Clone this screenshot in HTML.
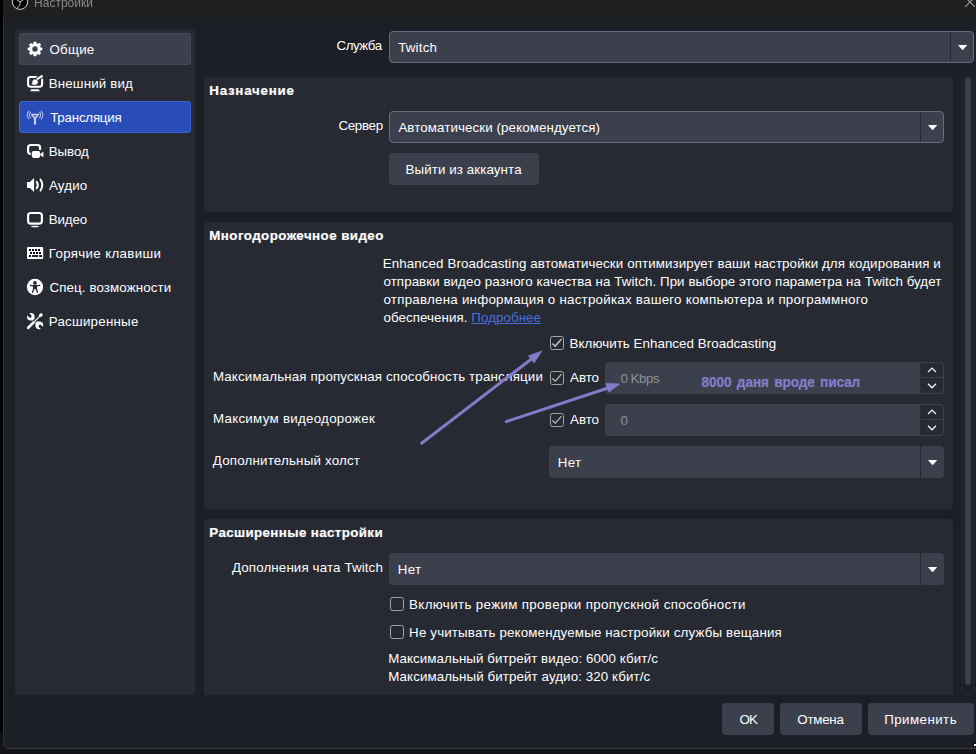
<!DOCTYPE html>
<html lang="ru">
<head>
<meta charset="utf-8">
<title>Настройки</title>
<style>
*{box-sizing:border-box;margin:0;padding:0}
html,body{width:976px;height:754px;overflow:hidden;background:#000}
body{position:relative;font-family:"Liberation Sans",sans-serif;font-size:13.33px;color:#fefefe;line-height:16px}
.abs{position:absolute}
.t{position:absolute;white-space:nowrap;line-height:16px;height:16px}
.b{font-weight:bold;-webkit-text-stroke:0.2px #fefefe}
#under{left:0;top:732px;width:976px;height:22px;background:linear-gradient(#0f1013 0,#0f1013 10px,#131418 11px,#141519 17px,#111215 22px)}
#win{left:3px;top:-1px;width:980px;height:750px;background:#1d1f26;border:1px solid #333;border-bottom-color:#3c3c3c;border-bottom-left-radius:7px;overflow:hidden}
#title{left:3px;top:0;width:973px;height:18px;background:#1f1f1f}
.panel{position:absolute;background:#272a33;border-radius:4px}
.item{position:absolute;left:19px;width:172px;height:32px;border-radius:4px}
.item .t{left:30px;top:9px}
.item svg{position:absolute;left:3px;top:3px;width:28px;height:28px}
.combo{position:absolute;height:32px;background:#3c404d;border-radius:4px}
.combo .sep{position:absolute;right:23px;top:0;width:1px;height:100%;background:#272a33}
.combo .arr{position:absolute;right:6.5px;top:13.7px;width:9.8px;height:5.6px;background:#fefefe;clip-path:polygon(0 0,100% 0,50% 100%)}
.combo .t{left:9px;top:9px}
.btn{position:absolute;height:32px;background:#3c404d;border-radius:4px;text-align:center}
.btn .t{position:static;display:inline-block;margin-top:9px}
.cb{position:absolute;width:14px;height:14px;border:1px solid #a3a3a7;border-radius:2.5px;background:#272a33}
.cb svg{position:absolute;left:-1px;top:-1px;width:14px;height:14px}
.spin{position:absolute;left:605px;width:339px;height:32px;background:#3c404d;border-radius:4px;overflow:hidden}
.spin .bt{position:absolute;left:315px;top:1px;width:23px;height:30px;background:#272a33;border-radius:0 3px 3px 0}
.spin .bt i{position:absolute;left:1px;top:14px;width:22px;height:1px;background:#3c404d}
.spin svg{position:absolute;left:315px;top:0;width:24px;height:32px}
/*FIT*/
#t0{letter-spacing:0.020px;margin-left:0.50px}
#t1{letter-spacing:0.222px;margin-left:0.50px}
#t2{letter-spacing:0.157px;margin-left:-0.30px}
#t3{letter-spacing:-0.224px;margin-left:1.21px}
#t4{letter-spacing:-0.105px;margin-left:-0.21px}
#t5{letter-spacing:0.129px;margin-left:0.00px}
#t6{letter-spacing:-0.156px;margin-left:-0.21px}
#t7{letter-spacing:0.328px;margin-left:-0.21px}
#t8{letter-spacing:0.107px;margin-left:0.50px}
#t9{letter-spacing:0.231px;margin-left:-0.21px}
#t10{letter-spacing:-0.482px;margin-left:0.50px}
#t11{letter-spacing:0.188px;margin-left:0.21px}
#t12{letter-spacing:0.750px;margin-left:0.30px}
#t13{letter-spacing:-0.299px;margin-left:0.40px}
#t14{letter-spacing:0.094px;margin-left:0.40px}
#t15{letter-spacing:0.098px;margin-left:-0.81px}
#t16{letter-spacing:0.445px;margin-left:0.30px}
#t17{letter-spacing:0.106px;margin-left:-0.30px}
#t18{letter-spacing:0.070px;margin-left:0.50px}
#t19{letter-spacing:0.247px;margin-left:0.50px}
#t20{letter-spacing:0.069px;margin-left:0.50px}
#t21{letter-spacing:0.052px;margin-left:-0.40px}
#t22{letter-spacing:0.143px;margin-left:-0.10px}
#t23{letter-spacing:-0.044px;margin-left:0.10px}
#t24{letter-spacing:-0.466px;margin-left:-0.60px}
#t25{letter-spacing:0.281px;margin-left:-0.10px}
#t26{letter-spacing:-0.044px;margin-left:0.10px}
#t27{letter-spacing:0.000px;margin-left:-0.60px}
#t28{letter-spacing:0.194px;margin-left:-0.21px}
#t29{letter-spacing:0.327px;margin-left:-0.25px}
#ann{letter-spacing:0.163px;margin-left:0.61px}
#t30{letter-spacing:0.378px;margin-left:0.30px}
#t31{letter-spacing:0.129px;margin-left:0.00px}
#t32{letter-spacing:0.352px;margin-left:-0.30px}
#t33{letter-spacing:0.350px;margin-left:-0.90px}
#t34{letter-spacing:0.157px;margin-left:-0.90px}
#t35{letter-spacing:0.071px;margin-left:-0.80px}
#t36{letter-spacing:0.093px;margin-left:-0.80px}
#t37{letter-spacing:-0.900px;margin-left:0.44px}
#t38{letter-spacing:-0.241px;margin-left:-1.14px}
#t39{letter-spacing:0.435px;margin-left:-0.71px}
/*ENDFIT*/
</style>
</head>
<body>
<div id="under" class="abs"></div>
<div id="win" class="abs"></div>
<div id="title" class="abs"></div>

<!-- title bar -->
<svg class="abs" style="left:10px;top:-9px;width:20px;height:20px" viewBox="0 0 20 20"><circle cx="10" cy="10.7" r="7.7" fill="#000" stroke="#d2d2d2" stroke-width="1"/><path d="M10 10.6V13.2Q9.7 15.3 7.2 16.9M10 10.8L6.5 8.6M10 10.8L13.6 8.7" fill="none" stroke="#c4c4c4" stroke-width="1"/></svg>
<div id="t0" class="t" style="left:33px;top:-5px;font-size:12px;color:#8a8a8a;will-change:transform">Настройки</div>
<svg class="abs" style="left:964px;top:-4px;width:12px;height:12px" viewBox="0 0 12 12"><path d="M1.2 1.2L10.8 10.8M10.8 1.2L1.2 10.8" stroke="#a0a0a0" stroke-width="1.1" fill="none"/></svg>

<!-- sidebar -->
<div class="panel" style="left:15px;top:29px;width:180px;height:666px"></div>
<div class="item" style="top:33px;background:#3c404d;box-shadow:inset 0 0 0 1px #464b59"><svg viewBox="0 0 28 28"><g transform="translate(13 13)" fill="#fff"><rect x="-1.55" y="-7.25" width="3.1" height="3.2" rx="0.7" transform="rotate(0)"/><rect x="-1.55" y="-7.25" width="3.1" height="3.2" rx="0.7" transform="rotate(45)"/><rect x="-1.55" y="-7.25" width="3.1" height="3.2" rx="0.7" transform="rotate(90)"/><rect x="-1.55" y="-7.25" width="3.1" height="3.2" rx="0.7" transform="rotate(135)"/><rect x="-1.55" y="-7.25" width="3.1" height="3.2" rx="0.7" transform="rotate(180)"/><rect x="-1.55" y="-7.25" width="3.1" height="3.2" rx="0.7" transform="rotate(225)"/><rect x="-1.55" y="-7.25" width="3.1" height="3.2" rx="0.7" transform="rotate(270)"/><rect x="-1.55" y="-7.25" width="3.1" height="3.2" rx="0.7" transform="rotate(315)"/><path fill-rule="evenodd" d="M0-5.75A5.75 5.75 0 1 1 0 5.75A5.75 5.75 0 1 1 0-5.75ZM0-2.7A2.7 2.7 0 1 0 0 2.7A2.7 2.7 0 1 0 0-2.7Z"/></g></svg><div id="t1" class="t">Общие</div></div>
<div class="item" style="top:67px"><svg viewBox="0 0 28 28"><rect x="6.1" y="7" width="14" height="9.7" rx="2.4" fill="none" stroke="#fff" stroke-width="2.1"/><path d="M8.1 21.2L9.3 19.2H16.7L17.9 21.2Z" fill="#fff"/><path d="M14.8 9.4L21 5.3" stroke="#272a33" stroke-width="4.4" fill="none"/><path d="M14.8 9.4L20.6 5.55" stroke="#fff" stroke-width="2.2" fill="none"/><path d="M9.8 15C9.6 12.4 10.2 9.2 13.1 9.1C15 9.1 16.3 10.5 16.2 12.2C16.1 14 14.6 15.1 12.9 15.1Z" fill="#fff" stroke="#272a33" stroke-width="0.6"/></svg><div id="t2" class="t">Внешний вид</div></div>
<div class="item" style="top:101px;background:#284cb8;box-shadow:inset 0 0 0 1px #3c63d0"><svg viewBox="0 0 28 28"><g fill="none" stroke="#ccd1ee" stroke-linecap="round"><path d="M9.6 10.6H16.4L13 14.6Z" stroke-width="1.5" stroke-linejoin="round"/><path d="M13 14V20.6" stroke-width="2.2" stroke-linecap="butt"/><path d="M8.5 8.2Q6.3 11 8.5 13.8M6.7 7.2Q3.7 11 6.7 14.8M17.5 8.2Q19.7 11 17.5 13.8M19.3 7.2Q22.3 11 19.3 14.8" stroke-width="1.1" stroke="#b3bbe7"/></g></svg><div id="t3" class="t">Трансляция</div></div>
<div class="item" style="top:135px"><svg viewBox="0 0 28 28"><rect x="6.1" y="7" width="12" height="8.9" rx="2.6" fill="none" stroke="#fff" stroke-width="2.2"/><rect x="8.8" y="12" width="13.4" height="9" fill="#272a33"/><rect x="9.8" y="13" width="8.3" height="6.9" rx="1.8" fill="#fff"/><path d="M17.8 16.5L21.2 13.9V19.1Z" fill="#fff" stroke="#fff" stroke-width="0.4" stroke-linejoin="round"/></svg><div id="t4" class="t">Вывод</div></div>
<div class="item" style="top:169px"><svg viewBox="0 0 28 28"><path d="M5.5 10.1H7.8L12.1 6.1V19.9L7.8 15.9H5.5Q5 15.9 5 15.4V10.6Q5 10.1 5.5 10.1Z" fill="#fff"/><path d="M14.7 9.8Q16.9 13 14.7 16.2" fill="none" stroke="#fff" stroke-width="2" stroke-linecap="round"/><path d="M18.5 7.6Q22 13 18.5 18.4" fill="none" stroke="#fff" stroke-width="2" stroke-linecap="round"/></svg><div id="t5" class="t">Аудио</div></div>
<div class="item" style="top:203px"><svg viewBox="0 0 28 28"><rect x="6.1" y="7" width="13.8" height="10.6" rx="2.6" fill="none" stroke="#fff" stroke-width="2.2"/><ellipse cx="13" cy="20.5" rx="4.1" ry="0.7" fill="#fff"/></svg><div id="t6" class="t">Видео</div></div>
<div class="item" style="top:237px"><svg viewBox="0 0 28 28"><rect x="5" y="6.9" width="16.2" height="12.2" rx="1.2" fill="#fff"/><g fill="#08090d"><rect x="7" y="9" width="2" height="2"/><rect x="10" y="9" width="2" height="2"/><rect x="13" y="9" width="2" height="2"/><rect x="16" y="9" width="2" height="2"/><rect x="8" y="12" width="2" height="2"/><rect x="11" y="12" width="2" height="2"/><rect x="14" y="12" width="2" height="2"/><rect x="17" y="12" width="2" height="2"/><rect x="7" y="15" width="2" height="2"/><rect x="10.1" y="15.1" width="5.9" height="1.8"/><rect x="17.1" y="15.1" width="2.9" height="1.8"/></g></svg><div id="t7" class="t">Горячие клавиши</div></div>
<div class="item" style="top:271px"><svg viewBox="0 0 28 28"><circle cx="13" cy="13" r="8.15" fill="#fff"/><g fill="none" stroke="#24262e" stroke-linecap="round"><circle cx="12.95" cy="8.9" r="1.9" fill="#24262e" stroke="none"/><path d="M8.3 11.4L11.6 11.8H14.4L17.7 11.4" stroke-width="1.2"/><path d="M11.6 11.8H14.4V15L15.5 18.3M11.6 11.8V15L10.5 18.3" stroke-width="1.3"/><rect x="11.7" y="11.8" width="2.6" height="3.4" fill="#24262e" stroke="none"/></g></svg><div id="t8" class="t">Спец. возможности</div></div>
<div class="item" style="top:305px"><svg viewBox="0 0 28 28"><g><path d="M9.6 9.6L16.6 16.6" stroke="#fff" stroke-width="3.3" fill="none"/><circle cx="8.8" cy="8.8" r="3.8" fill="#fff"/><path d="M8.1 8.1L3.5 3.5" stroke="#272a33" stroke-width="2.9" stroke-linecap="round"/><circle cx="17.3" cy="17.3" r="3.9" fill="#fff"/><path d="M18.1 18.1L23 23" stroke="#272a33" stroke-width="2.9" stroke-linecap="round"/><path d="M6.2 19.6L18.6 7.2" stroke="#272a33" stroke-width="3.7" fill="none"/><path d="M6.2 19.7L11.4 14.6" stroke="#fff" stroke-width="2.7" stroke-linecap="round" fill="none"/><path d="M11 15L18 8.2" stroke="#fff" stroke-width="1.1" fill="none"/><rect x="-1.9" y="-1.5" width="3.8" height="3" rx="1.2" transform="translate(18.8 7.1) rotate(-45)" fill="#fff"/></g></svg><div id="t9" class="t">Расширенные</div></div>

<!-- service row -->
<div id="t10" class="t" style="left:336px;top:38px">Служба</div>
<div class="combo" style="left:389px;top:31px;width:585px;border:1px solid #656c84"><div id="t11" class="t" style="left:8px;top:8px">Twitch</div><div class="sep" style="right:22px;background:#272a33"></div><div class="arr" style="right:5.5px;top:12.7px"></div></div>

<!-- panel 1 -->
<div class="panel" style="left:204px;top:77px;width:749px;height:135px"></div>
<div id="t12" class="t b" style="left:209px;top:83px">Назначение</div>
<div id="t13" class="t" style="left:338px;top:118px">Сервер</div>
<div class="combo" style="left:389px;top:111px;width:555px;border:1px solid #656c84"><div id="t14" class="t" style="left:8px;top:8px">Автоматически (рекомендуется)</div><div class="sep" style="right:22px"></div><div class="arr" style="right:5.5px;top:12.7px"></div></div>
<div class="btn" style="left:389px;top:153px;width:150px"><div id="t15" class="t">Выйти из аккаунта</div></div>

<!-- panel 2 -->
<div class="panel" style="left:204px;top:222px;width:749px;height:287px"></div>
<div id="t16" class="t b" style="left:209px;top:228px">Многодорожечное видео</div>
<div id="t17" class="t" style="left:383px;top:256px">Enhanced Broadcasting автоматически оптимизирует ваши настройки для кодирования и</div>
<div id="t18" class="t" style="left:383px;top:274px">отправки видео разного качества на Twitch. При выборе этого параметра на Twitch будет</div>
<div id="t19" class="t" style="left:383px;top:292px">отправлена информация о настройках вашего компьютера и программного</div>
<div id="t20" class="t" style="left:383px;top:310px">обеспечения. <span style="color:#4870dc;text-decoration:underline">Подробнее</span></div>

<div class="cb" style="left:550px;top:336px"><svg viewBox="0 0 14 14"><path d="M2.4 7.6L5.3 10.1L11.5 3.1" fill="none" stroke="#bcbcc0" stroke-width="1.5"/></svg></div>
<div id="t21" class="t" style="left:570px;top:336px">Включить Enhanced Broadcasting</div>

<div id="t22" class="t" style="left:213px;top:369px">Максимальная пропускная способность трансляции</div>
<div class="cb" style="left:550px;top:371px"><svg viewBox="0 0 14 14"><path d="M2.4 7.6L5.3 10.1L11.5 3.1" fill="none" stroke="#b9b9bd" stroke-width="1.3"/></svg></div>
<div id="t23" class="t" style="left:570px;top:370px">Авто</div>
<div class="spin" style="top:362px"><div id="t24" class="t" style="left:16px;top:9px;color:#8e9099">0 Kbps</div><div class="bt"><i></i></div><svg viewBox="0 0 24 32"><path d="M8 10L12 6.1L16 10M8 21.7L12 25.7L16 21.7" fill="none" stroke="#f2f2f2" stroke-width="1.35"/></svg></div>

<div id="t25" class="t" style="left:213px;top:411px">Максимум видеодорожек</div>
<div class="cb" style="left:550px;top:413px"><svg viewBox="0 0 14 14"><path d="M2.4 7.6L5.3 10.1L11.5 3.1" fill="none" stroke="#b9b9bd" stroke-width="1.3"/></svg></div>
<div id="t26" class="t" style="left:570px;top:412px">Авто</div>
<div class="spin" style="top:404px"><div id="t27" class="t" style="left:16px;top:9px;color:#8e9099">0</div><div class="bt"><i></i></div><svg viewBox="0 0 24 32"><path d="M8 10L12 6.1L16 10M8 21.7L12 25.7L16 21.7" fill="none" stroke="#f2f2f2" stroke-width="1.35"/></svg></div>

<div id="t28" class="t" style="left:213px;top:453px">Дополнительный холст</div>
<div class="combo" style="left:549px;top:446px;width:395px"><div id="t29" class="t">Нет</div><div class="sep"></div><div class="arr"></div></div>


<!-- annotations -->
<div class="t b" id="ann" style="left:701px;top:375px;font-size:13.6px;color:#867ecb;-webkit-text-stroke:0.2px #867ecb;word-spacing:1.6px;letter-spacing:-0.075px;margin-left:0.6px;transform:scaleY(1.09);transform-origin:0 12px">8000 даня вроде писал</div>
<svg class="abs" style="left:0;top:0;width:976px;height:754px;pointer-events:none" viewBox="0 0 976 754">
<g fill="#827bc7" stroke="#827bc7">
<path d="M421.6 443.2L531.5 359" stroke-width="3" stroke-linecap="round" fill="none"/>
<path d="M542.2 350.8L528.3 355.7L534 363.1Z" stroke-width="0.6" stroke-linejoin="round"/>
<path d="M506.3 421.6L608 388" stroke-width="3" stroke-linecap="round" fill="none"/>
<path d="M619.8 383.9L605.6 383.2L608.9 392.2Z" stroke-width="0.6" stroke-linejoin="round"/>
</g></svg>
<!-- panel 3 -->
<div class="panel" style="left:204px;top:519px;width:749px;height:176px;border-bottom-left-radius:0;border-bottom-right-radius:0"></div>
<div id="t30" class="t b" style="left:209px;top:525px">Расширенные настройки</div>
<div id="t31" class="t" style="left:232px;top:560px">Дополнения чата Twitch</div>
<div class="combo" style="left:389px;top:553px;width:555px"><div id="t32" class="t">Нет</div><div class="sep"></div><div class="arr"></div></div>
<div class="cb" style="left:390px;top:597px"></div>
<div id="t33" class="t" style="left:410px;top:597px">Включить режим проверки пропускной способности</div>
<div class="cb" style="left:390px;top:625px"></div>
<div id="t34" class="t" style="left:410px;top:625px">Не учитывать рекомендуемые настройки службы вещания</div>
<div id="t35" class="t" style="left:389px;top:651px">Максимальный битрейт видео: 6000 кбит/с</div>
<div id="t36" class="t" style="left:389px;top:669px">Максимальный битрейт аудио: 320 кбит/с</div>

<!-- scrollbar -->
<div class="abs" style="left:962px;top:74px;width:12px;height:621px;border:1px solid #272a33;border-radius:6px"></div>
<div class="abs" style="left:965px;top:77px;width:6px;height:608px;background:#3c404d;border-radius:3px"></div>

<div class="abs" style="left:973px;top:743px;width:4px;height:4px;background:#0c0d10"></div><div class="abs" style="left:974px;top:744px;width:2px;height:2px;background:#ececec"></div>
<!-- buttons -->
<div class="btn" style="left:722px;top:703px;width:52px"><div id="t37" class="t">OK</div></div>
<div class="btn" style="left:780px;top:703px;width:82px"><div id="t38" class="t">Отмена</div></div>
<div class="btn" style="left:868px;top:703px;width:106px"><div id="t39" class="t">Применить</div></div>

</body>
</html>
